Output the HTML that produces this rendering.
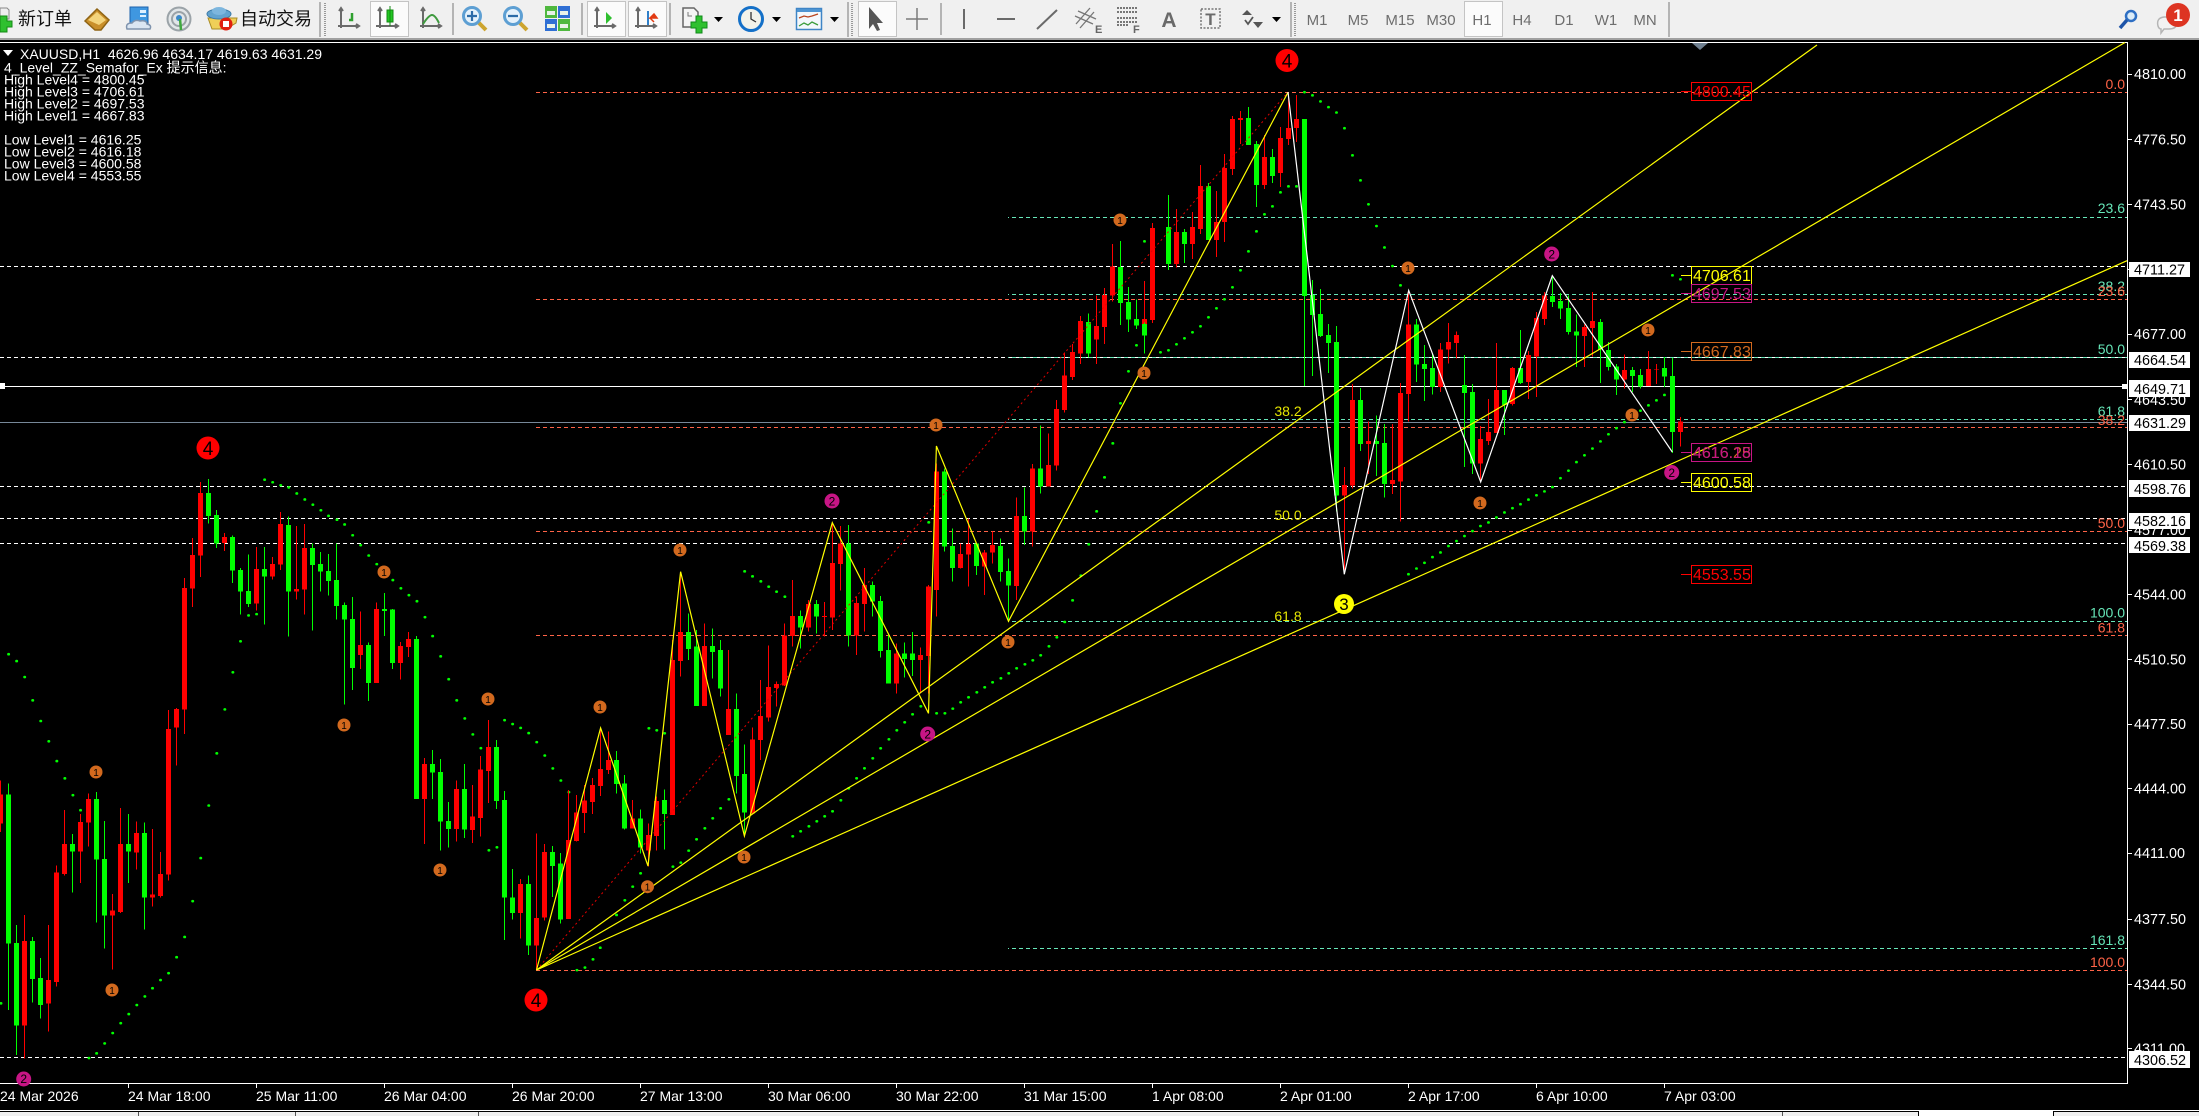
<!DOCTYPE html>
<html><head><meta charset="utf-8"><title>XAUUSD,H1</title>
<style>
html,body{margin:0;padding:0;background:#000;width:2199px;height:1116px;overflow:hidden}
svg{display:block}
text{font-family:"Liberation Sans","Noto Sans CJK SC",sans-serif}
.ns *{vector-effect:non-scaling-stroke}
.w{fill:none;stroke-width:1;shape-rendering:crispEdges}
.b{fill:none;stroke-width:5;shape-rendering:crispEdges}
.dots{fill:none;stroke:#0f0;stroke-width:2.6;stroke-linecap:round}
.tf{font-size:15px;fill:#6e6e6e;text-anchor:middle}
.px{font-size:14.4px;fill:#fff}
.lb{font-size:14.4px;fill:#000}
.tm{font-size:14px;fill:#fff}
.ov{font-size:14px;fill:#fff}
.fb{font-size:14px;text-anchor:end}
.bx{font-size:16px}
.num{text-anchor:middle;fill:#000}
</style></head><body>
<svg width="2199" height="1116" viewBox="0 0 2199 1116" xmlns="http://www.w3.org/2000/svg">
<rect width="2199" height="1116" fill="#000"/>

<!-- toolbar -->
<rect width="2199" height="38" fill="#f0f0f0"/>
<rect y="38" width="2199" height="2" fill="#a0a0a0"/>

<!-- new order -->
<path d="M0 8h7l2 2v9H0z" fill="#eee" stroke="#888"/>
<path d="M0 16h7v5h5v6H7v5H0z" fill="#2fc02f" stroke="#138a13"/>
<text x="18" y="25" font-size="18" fill="#111">新订单</text>
<!-- book -->
<path d="M85 21 97 9l12 11-8 10-6 0z" fill="#c98f2a" stroke="#8f6414" stroke-width="1.5"/>
<path d="M88 20 97 12l9 8-7 5z" fill="#f3d47c"/>
<!-- doc cloud -->
<rect x="130" y="7" width="18" height="17" fill="#3f97e0" stroke="#1c62ad"/>
<path d="M140 10h6v3h-6zM140 15h6v2h-6z" fill="#dff0ff"/>
<path d="M127 29q-2-6 5-6 3-4 8-2 7-1 7 3 5 1 3 5z" fill="#dbe6f2" stroke="#7f93ad" stroke-width="1.5"/>
<!-- signals -->
<circle cx="179" cy="19" r="11.5" fill="#e2e6e8" stroke="#9ba3a8" stroke-width="2"/>
<circle cx="179" cy="19" r="7" fill="none" stroke="#9ba3a8" stroke-width="2"/>
<circle cx="179" cy="18" r="3" fill="#3d89c9"/>
<path d="M180 19 181 30" stroke="#3fa83f" stroke-width="2.5"/>
<!-- auto trading -->
<path d="M208 18l4 11h14l10-6 1-5z" fill="#f0cf58" stroke="#a88b25"/>
<ellipse cx="219" cy="14" rx="12" ry="5" fill="#62a3cf" stroke="#3b79a6"/>
<ellipse cx="219" cy="11" rx="7" ry="4" fill="#7db6de"/>
<circle cx="226" cy="24" r="6.5" fill="#e01f10"/><rect x="223" y="21" width="6" height="6" fill="#fff"/>
<text x="240" y="25" font-size="18" fill="#111">自动交易</text>
<!-- separators -->
<path d="M320 2v35M453 3v32M582 3v32M670 3v32M848 2v35M941 3v32M1291 2v35M1669 2v35" stroke="#a0a0a0" stroke-width="1.5"/>
<path d="M325 3v33M852 3v33M1295 3v33" stroke="#999" stroke-width="2" stroke-dasharray="1 1"/>

<!-- buttons -->
<g fill="#fbfbfb" stroke="#c4c4c4">
<rect x="370.5" y="1.5" width="38" height="35"/>
<rect x="587.5" y="1.5" width="38" height="35"/>
<rect x="628.5" y="1.5" width="38" height="35"/>
<rect x="858.5" y="1.5" width="38" height="35"/>
<rect x="1464.5" y="1.5" width="38" height="35"/>
</g>
<!-- chart axes -->
<g fill="none" stroke="#6a6a6a" stroke-width="2">
<path d="M341 9v19M338 26h21M339 11l2-3 2 3M356 24l3 2-3 2"/>
<path d="M380 8v20M376 26h22M378 11l2-3 2 3M395 24l3 2-3 2"/>
<path d="M423 9v19M420 26h21M421 11l2-3 2 3M438 24l3 2-3 2"/>
<path d="M597 9v19M594 26h21M595 11l2-3 2 3M612 24l3 2-3 2"/>
<path d="M638 9v19M635 26h21M636 11l2-3 2 3M653 24l3 2-3 2"/>
</g>
<path d="M352 13v7h-3" fill="none" stroke="#2fa02f" stroke-width="2.5"/>
<rect x="387" y="10" width="6" height="12" fill="#22c722" stroke="#138a13"/><path d="M390 6v20" stroke="#138a13"/>
<path d="M423 24q6-9 9-9t7 8" fill="none" stroke="#3f9a3f" stroke-width="2"/>
<path d="M606 12l6 6-6 6z" fill="#2fc02f"/>
<path d="M648 11v14" stroke="#2f7fc9" stroke-width="2"/><path d="M657 18h-4l-3 0 4-4zm-7 0 4 4" fill="#e23b12" stroke="#e23b12" stroke-width="1.5"/>
<!-- zoom -->
<g>
<path d="M478 22l8 8M519 22l8 8" stroke="#cda52f" stroke-width="4"/>
<circle cx="472" cy="16" r="8.5" fill="#e6f2fb" stroke="#5d9fd3" stroke-width="3"/>
<circle cx="513" cy="16" r="8.5" fill="#e6f2fb" stroke="#5d9fd3" stroke-width="3"/>
<path d="M467 16h10M472 11v10M508 16h10" stroke="#2d6ca8" stroke-width="2.2"/>
</g>
<!-- tile -->
<rect x="545" y="6" width="12" height="12" fill="#4fb83f"/><rect x="558" y="6" width="12" height="12" fill="#2f6fd4"/>
<rect x="545" y="19" width="12" height="12" fill="#2f6fd4"/><rect x="558" y="19" width="12" height="12" fill="#4fb83f"/>
<path d="M547 11h8v4h-8zM560 11h8v4h-8zM547 24h8v4h-8zM560 24h8v4h-8z" fill="#e8f2e8"/>
<!-- new chart -->
<path d="M683 8h11l4 4v15h-15z" fill="#f4f4f4" stroke="#666" stroke-width="1.5"/>
<path d="M688 12v4h4" fill="none" stroke="#777"/>
<path d="M696 16h6v6h5v6h-5v5h-6v-5h-5v-6h5z" fill="#2fc02f" stroke="#0f8a1a"/>
<!-- dropdowns -->
<path d="M714 17h9l-4.500 5zM772 17h9l-4.500 5zM830 17h9l-4.500 5zM1272 17h9l-4.500 5z" fill="#000"/>
<!-- clock -->
<circle cx="751" cy="19" r="11.500" fill="#f3f3ea" stroke="#1470c8" stroke-width="3"/>
<path d="M751 12v7l5 3" fill="none" stroke="#333" stroke-width="1.300"/>
<!-- templates -->
<rect x="796.500" y="8.500" width="25" height="21" fill="#f4f8fc" stroke="#3f85c6" stroke-width="1.500"/>
<rect x="797" y="9" width="24" height="3" fill="#4d94d2"/>
<path d="M799 18l5-2 4 1 4-1 6-2" fill="none" stroke="#b84520" stroke-width="1.300"/>
<path d="M799 26l5-3 4 2 4-3 6 3" fill="none" stroke="#3b9c3b" stroke-width="1.300"/>
<!-- cursor -->
<path d="M869 7v22l4-5 4 7 3-1-3-7h6z" fill="#555"/>
<!-- cross -->
<path d="M917 8v22M906 19h22" stroke="#7a7a7a" stroke-width="1.500" fill="none"/>
<!-- vertical/h/trend -->
<path d="M964 9v20M997 19h18M1037 29l20-19" stroke="#6a6a6a" stroke-width="2" fill="none"/>
<!-- fib channel -->
<path d="M1076 24l14-16M1080 28l14-16M1075 16l18 8M1078 11l18 8" stroke="#777" stroke-width="1.300" fill="none"/>
<text x="1095" y="33" font-size="11" font-weight="bold" fill="#666">E</text>
<!-- fib -->
<path d="M1117 8h21M1117 12h21M1117 18h21M1117 22h21M1117 25h12" stroke="#777" stroke-width="2" stroke-dasharray="2 1" fill="none"/>
<text x="1133" y="33" font-size="11" font-weight="bold" fill="#666">F</text>
<text x="1169" y="27" font-size="21" font-weight="bold" fill="#6a6a6a" text-anchor="middle">A</text>
<rect x="1201" y="9" width="19" height="19" fill="none" stroke="#777" stroke-width="1.500" stroke-dasharray="2 1.500"/>
<text x="1210.500" y="25" font-size="17" font-weight="bold" fill="#6a6a6a" text-anchor="middle">T</text>
<path d="M1242 15l5-5 5 5zM1253 22h10l-5 6z" fill="#555"/><path d="M1245 20l3 4 5-7" stroke="#555" stroke-width="1.800" fill="none"/>
<!-- timeframes -->
<text class="tf" x="1317" y="25">M1</text><text class="tf" x="1358" y="25">M5</text><text class="tf" x="1400" y="25">M15</text><text class="tf" x="1441" y="25">M30</text><text class="tf" x="1482" y="25">H1</text><text class="tf" x="1522" y="25">H4</text><text class="tf" x="1564" y="25">D1</text><text class="tf" x="1606" y="25">W1</text><text class="tf" x="1645" y="25">MN</text>
<!-- search -->
<circle cx="2131" cy="16" r="5" fill="#dcecf8" stroke="#2e6fc4" stroke-width="2.500"/>
<path d="M2127 20l-7 8" stroke="#1e54a8" stroke-width="3.500"/>
<!-- chat/badge -->
<path d="M2158 26q-2-8 6-9h8q6 1 5 7-1 5-8 5h-5l-3 4v-4q-2 0-3-3z" fill="#f2f2f2" stroke="#b5b5b5" stroke-width="1.500"/>
<circle cx="2178" cy="15" r="12" fill="#dd3422"/>
<text x="2178" y="21" font-size="17" font-weight="bold" fill="#fff" text-anchor="middle">1</text>

<!-- chart frame -->
<path d="M0 42.500H2127.500V1083.500H0" fill="none" stroke="#fff"/>
<path d="M128.500 1084v4M256.500 1084v4M384.500 1084v4M512.500 1084v4M640.500 1084v4M768.500 1084v4M896.500 1084v4M1024.500 1084v4M1152.500 1084v4M1280.500 1084v4M1408.500 1084v4M1536.500 1084v4M1664.500 1084v4" stroke="#fff"/>
<path d="M1692 43h16l-8 7z" fill="#6f7f8f"/>

<!-- horizontal levels -->
<g fill="none" stroke-dasharray="4 3" shape-rendering="crispEdges">
<path d="M0 266.500H2127M0 357.500H2127M0 486.500H2127M0 518.500H2127M0 543.500H2127M0 1057.500H2127" stroke="#fff"/>
<path d="M1008 92.500H2127M1008 217.500H2127M1008 294.500H2127M1008 357.500H2127M1008 419.500H2127M1008 621.500H2127M1008 948.500H2127" stroke="#66e6b8" stroke-dashoffset="3"/>
<path d="M536 92.500H2127M536 299.500H2127M536 427.500H2127M536 531.500H2127M536 635.500H2127M536 970.500H2127" stroke="#ff6347"/>
</g>
<path d="M0 386.500H2127" stroke="#fff" shape-rendering="crispEdges"/>
<path d="M0 422.500H2127" stroke="#778899" shape-rendering="crispEdges"/>
<rect x="0" y="383" width="5" height="6" fill="#fff"/><rect x="2122" y="384" width="5" height="5" fill="#fff"/>

<!-- dots (parabolic SAR) -->
<g class="ns dots">
<g transform="translate(0,440) scale(.3827,.431)"><path d="M2 1307h1M22 497h1M43 513h1M64 550h1M85 604h1M106 652h1M127 699h1M148 745h1M169 785h1M190 824h1M210 859h1M232 1434h1M252 1423h1M273 1400h1M294 1376h1M315 1353h1M336 1332h1M357 1311h1M378 1291h1M398 1272h1M419 1253h1M440 1237h1M461 1200h1M482 1153h1M503 1070h1M524 970h1M545 848h1M566 727h1M587 625h1M608 539h1M628 467h1M649 407h1M670 404h1M691 92h1M712 98h1M733 105h1M754 110h1M775 124h1M796 138h1M817 150h1M838 163h1M858 176h1M880 185h1M900 196h1M921 221h1M942 244h1M963 268h1M984 288h1M1005 307h1M1026 325h1M1047 344h1M1068 360h1M1089 374h1M1110 411h1M1130 455h1M1151 502h1M1172 555h1M1193 604h1M1214 646h1M1235 683h1M1256 715h1M1277 952h1M1298 945h1M1318 650h1M1339 659h1M1360 668h1M1381 680h1M1402 701h1M1423 732h1M1444 762h1M1465 790h1M1486 817h1M1507 1230h1M1528 1224h1M1549 1205h1M1568 1178h1"/></g>
<g transform="translate(550,400) scale(.4146,.3333)"><path d="M160 1545h1M180 1501h1M199 1460h1M218 1420h1M238 985h1M257 991h1M276 1000h1M296 1400h1M315 1388h1M334 1352h1M353 1318h1M373 1285h1M392 1255h1M411 1225h1M431 1198h1M469 514h1M488 529h1M508 544h1M527 560h1M546 575h1M566 590h1M585 1309h1M604 1294h1M624 1279h1M643 1264h1M662 1249h1M681 1234h1M701 1201h1M720 1165h1M739 1135h1M758 1105h1M778 1075h1M797 1045h1M817 1018h1M836 991h1M855 967h1M874 943h1M894 919h1M913 367h1M932 940h1M952 940h1M971 926h1M990 907h1M1009 892h1M1029 877h1M1048 862h1M1067 847h1M1087 835h1M1106 820h1M1125 805h1M1145 793h1M1164 781h1M1183 766h1M1203 739h1M1222 712h1M1241 666h1M1260 601h1M1280 527h1M1299 433h1M1318 334h1M1337 232h1M1357 130h1"/></g>
<g transform="translate(950,60) scale(.3333,.3333)"><path d="M511 1030h1M535 934h1M559 856h1M583 544h1M607 550h1M631 877h1M655 871h1M679 853h1M703 835h1M727 817h1M751 799h1M775 772h1M799 745h1M823 718h1M847 682h1M871 631h1M895 574h1M919 514h1M943 463h1M967 439h1M991 397h1M1015 379h1M1039 379h1"/></g>
<g transform="translate(1200,60) scale(.3333,.3571)"><path d="M313 90h1M337 99h1M361 116h1M385 132h1M409 147h1M433 191h1M457 267h1M481 337h1M505 404h1M529 465h1M553 525h1M577 577h1M601 631h1M625 1440h1M649 1424h1M673 1408h1M697 1392h1M721 1379h1M745 1361h1M769 1347h1M793 1333h1M817 1319h1M841 1305h1M865 1295h1M889 1281h1M913 1267h1M937 1255h1M961 1244h1M985 1231h1M1009 1219h1M1033 1208h1M1057 1196h1M1081 1171h1M1105 1150h1M1129 1126h1M1153 1107h1M1177 1088h1M1201 1068h1M1225 1048h1M1249 1031h1M1273 1014h1M1321 982h1M1345 967h1M1369 953h1M1393 938h1M1417 603h1M1441 614h1"/></g>
</g>

<!-- candles -->
<g class="ns">
<g transform="translate(0,440) scale(1,.431)">
<path class="w" stroke="#f00" d="M.5 790V910M24.500 1102V1435M48.500 1125V1372M56.500 987V1268M64.500 858V1010M80.500 868V1028M88.500 820V943M112.500 1053V1228M120.500 854V1097M136.500 885V997M152.500 902V1082M160.500 956V1062M168.500 626V1022M176.500 622V755M184.500 320V682M192.500 227V387M200.500 98V318M224.500 216V257M256.500 248V396M272.500 271V324M280.500 167V302M296.500 200V370M304.500 195V405M360.500 398V531M376.500 377V564M400.500 469V556M408.500 446V503M424.500 738V937M456.500 790V932M472.500 800V935M480.500 733V920M488.500 650V842M520.500 1018V1157M536.500 913V1230M544.500 937V1115M568.500 812V1111M576.500 824V932M584.500 800V912M592.500 784V868"/>
<path class="b" stroke="#f00" d="M.5 822V890M24.500 1162V1358M48.500 1253V1307M56.500 1004V1257M64.500 937V1007M80.500 886V955M88.500 833V888M112.500 1092V1103M120.500 937V1095M136.500 912V957M152.500 1055V1061M160.500 1007V1058M168.500 670V1008M176.500 624V667M184.500 343V625M192.500 267V345M200.500 123V268M224.500 225V239M256.500 299V379M272.500 288V317M280.500 195V289M296.500 346V352M304.500 251V347M360.500 476V499M376.500 392V564M400.500 478V517M408.500 462V480M424.500 752V833M456.500 810V902M472.500 874V905M480.500 765V877M488.500 712V768M520.500 1030V1097M536.500 1109V1173M544.500 956V1108M568.500 928V1111M576.500 864V930M584.500 837V866M592.500 800V840"/>
<path class="w" stroke="#0f0" d="M8.500 797V1322M16.500 1125V1427M32.500 1153V1305M40.500 1202V1342M72.500 914V1050M96.500 817V1120M104.500 884V1180M128.500 868V1028M144.500 888V1136M208.500 90V194M216.500 162V250M232.500 222V332M240.500 297V405M248.500 266V388M264.500 248V428M288.500 177V456M312.500 240V442M320.500 260V352M328.500 264V361M336.500 240V417M344.500 377V614M352.500 364V580M368.500 470V605M384.500 355V455M392.500 392V531M416.500 455V833M432.500 719V833M440.500 740V953M448.500 840V945M464.500 752V923M496.500 696V856M504.500 814V1160M512.500 995V1112M528.500 1010V1195M552.500 942V1060M560.500 958V1122"/>
<path class="b" stroke="#0f0" d="M8.500 823V1168M16.500 1167V1358M32.500 1162V1250M40.500 1248V1311M72.500 937V955M96.500 833V973M104.500 972V1103M128.500 937V955M144.500 912V1061M208.500 123V176M216.500 174V240M232.500 225V303M240.500 302V352M248.500 350V380M264.500 299V317M288.500 197V352M312.500 251V290M320.500 288V305M328.500 304V327M336.500 325V385M344.500 383V417M352.500 415V529M368.500 476V564M384.500 392V397M392.500 393V517M416.500 462V833M432.500 752V772M440.500 770V885M448.500 884V902M464.500 810V904M496.500 712V838M504.500 835V1062M512.500 1061V1097M528.500 1030V1173M552.500 956V988M560.500 983V1112"/>
</g>
<g transform="translate(0,400) scale(1,.3333)">
<path class="w" stroke="#f00" d="M600.500 985V1188M608.500 995V1122M632.500 1200V1285M648.500 1270V1400M656.500 1190V1352M672.500 720V1245M680.500 520V830M704.500 670V918M728.500 750V1005M752.500 982V1240M760.500 840V1080M768.500 736V965M776.500 845V920M784.500 670V858M792.500 540V740M808.500 600V695M824.500 606V710M832.500 368V690M840.500 378V572M856.500 590V765M864.500 504V695M896.500 730V880M920.500 742V880M928.500 555V880M936.500 190V650M960.500 430V505M968.500 355V560M984.500 450V585M992.500 395V490M1016.500 292V600M1032.500 192V440M1048.500 100V260M1056.500 0V212"/>
<path class="b" stroke="#f00" d="M600.500 1107V1158M608.500 1080V1110M632.500 1255V1285M648.500 1305V1352M656.500 1203V1308M672.500 780V1245M680.500 696V783M704.500 738V918M728.500 927V1005M752.500 1018V1240M760.500 948V1020M768.500 861V952M776.500 852V864M784.500 706V856M792.500 648V708M808.500 612V682M824.500 648V651M832.500 489V652M840.500 430V492M856.500 609V707M864.500 555V612M896.500 760V850M920.500 765V780M928.500 560V768M936.500 215V570M960.500 462V504M968.500 432V464M984.500 458V500M992.500 435V458M1016.500 348V558M1032.500 205V395M1048.500 195V260M1056.500 27V197"/>
<path class="w" stroke="#0f0" d="M616.500 1053V1180M624.500 1125V1288M640.500 1228V1360M664.500 1168V1348M688.500 640V780M696.500 690V918M712.500 685V835M720.500 720V890M736.500 880V1180M744.500 1033V1305M800.500 632V745M816.500 600V700M848.500 375V740M872.500 545V650M880.500 588V772M888.500 700V850M904.500 728V832M912.500 696V828M944.500 205V455M952.500 385V545M976.500 430V525M1000.500 415V545M1008.500 475V665M1024.500 262V435M1040.500 77V280"/>
<path class="b" stroke="#0f0" d="M616.500 1080V1152M624.500 1150V1285M640.500 1255V1342M664.500 1200V1242M688.500 696V747M696.500 740V918M712.500 738V756M720.500 750V866M736.500 927V1128M744.500 1122V1237M800.500 648V682M816.500 612V650M848.500 430V706M872.500 555V605M880.500 603V753M888.500 750V850M904.500 760V777M912.500 760V780M944.500 215V440M952.500 438V504M976.500 430V498M1000.500 438V516M1008.500 513V557M1024.500 348V395M1040.500 205V260"/>
</g>
<g transform="translate(0,60) scale(1,.3333)">
<path class="w" stroke="#f00" d="M1064.500 878V1058M1072.500 852V960M1080.500 768V912M1096.500 706V912M1104.500 684V852M1112.500 552V725M1144.500 663V834M1152.500 489V789M1176.500 447V622M1192.500 456V597M1200.500 315V522M1216.500 393V591M1224.500 282V546M1232.500 168V345M1240.500 153V252M1264.500 225V387M1280.500 201V381M1288.500 100V255M1296.500 105V246"/>
<path class="b" stroke="#f00" d="M1064.500 947V1050M1072.500 876V951M1080.500 783V880M1096.500 798V838M1104.500 705V801M1112.500 620V706M1144.500 777V826M1152.500 504V780M1176.500 516V612M1192.500 501V552M1200.500 378V507M1216.500 486V540M1224.500 324V486M1232.500 177V327M1240.500 174V180M1264.500 291V375M1280.500 234V339M1288.500 204V237M1296.500 177V204"/>
<path class="w" stroke="#0f0" d="M1088.500 760V892M1120.500 543V795M1128.500 681V816M1136.500 718V807M1144.500 788V880M1168.500 405V630M1184.500 507V609M1208.500 369V540M1248.500 141V255M1256.500 243V441M1272.500 267V369M1304.500 177V978M1312.500 660V948M1320.500 687V831M1328.500 792V939"/>
<path class="b" stroke="#0f0" d="M1088.500 786V880M1120.500 621V729M1128.500 726V778M1136.500 777V796M1144.500 792V826M1168.500 501V612M1184.500 516V552M1208.500 378V540M1248.500 174V255M1256.500 252V375M1272.500 291V348M1304.500 177V708M1312.500 705V765M1320.500 762V828M1328.500 825V849"/>
</g>
<g transform="translate(0,60) scale(1,.3571)">
<path class="w" stroke="#0f0" d="M1336.500 745V1265M1360.500 918V1095M1376.500 995V1165M1384.500 1020V1225M1416.500 725V902M1424.500 798V955M1432.500 822V937M1464.500 826V1140M1472.500 908V1160M1504.500 924V1050M1520.500 756V908M1552.500 605V692M1560.500 652V725M1568.500 660V768M1576.500 712V860M1600.500 725V904M1608.500 790V870M1616.500 852V938M1632.500 860V930M1640.500 866V920M1664.500 832V916M1672.500 834V1100"/>
<path class="b" stroke="#0f0" d="M1336.500 790V1220M1360.500 952V1075M1376.500 1067V1075M1384.500 1072V1187M1416.500 740V853M1424.500 851V865M1432.500 862V916M1464.500 910V932M1472.500 930V1130M1504.500 924V966M1520.500 863V905M1552.500 661V678M1560.500 675V696M1568.500 694V762M1576.500 760V772M1600.500 734V810M1608.500 812V860M1616.500 858V895M1632.500 868V885M1640.500 882V915M1664.500 862V887M1672.500 885V1042"/>
<path class="w" stroke="#f00" d="M1344.500 1140V1428M1352.500 908V1200M1368.500 1012V1160M1392.500 1020V1215M1400.500 905V1293M1408.500 645V1012M1440.500 792V930M1448.500 736V850M1456.500 760V836M1480.500 1025V1180M1488.500 950V1078M1496.500 792V1045M1512.500 860V968M1528.500 815V950M1536.500 705V944M1544.500 650V742M1584.500 740V860M1592.500 650V830M1624.500 824V920M1648.500 815V913M1656.500 852V908M1680.500 1000V1082"/>
<path class="b" stroke="#f00" d="M1344.500 1190V1220M1352.500 952V1192M1368.500 1067V1075M1392.500 1176V1187M1400.500 932V1180M1408.500 740V935M1440.500 810V916M1448.500 790V811M1456.500 770V792M1480.500 1062V1130M1488.500 1042V1067M1496.500 924V1045M1512.500 862V964M1528.500 826V902M1536.500 722V830M1544.500 660V725M1584.500 748V773M1592.500 731V750M1624.500 868V895M1648.500 866V913M1656.500 865V867M1680.500 1013V1042"/>
</g>
</g>

<!-- red dotted trend -->
<path d="M536.500 970 1288 92" stroke="#e00000" stroke-dasharray="2 3" fill="none"/>
<!-- fan -->
<g fill="none" stroke="#ff0" stroke-width="1.200">
<path d="M536.500 970 1817 45"/>
<path d="M536.500 970 2125 42.500"/>
<path d="M536.500 970 2127 260.700"/>
<path d="M536.500 970 600.600 728 648 866 680.600 571.700 744.400 836 832.300 522.700 928.500 713.300 936.400 446 1008.500 621.300 1288 92.300"/>
</g>
<path d="M1288 92 1344.300 574.300 1408.700 290.400 1480.700 482 1552.300 275.700 1672.300 452" fill="none" stroke="#fff" stroke-width="1.200"/>

<!-- semafor badges -->
<g fill="#d2691e">
<circle cx="96" cy="772" r="6.500"/><circle cx="112" cy="990" r="6.500"/><circle cx="344" cy="725" r="6.500"/><circle cx="384" cy="572" r="6.500"/><circle cx="440" cy="870" r="6.500"/><circle cx="488" cy="699" r="6.500"/><circle cx="600" cy="707" r="6.500"/><circle cx="647.500" cy="886.700" r="6.500"/><circle cx="680" cy="550" r="6.500"/><circle cx="744" cy="857" r="6.500"/><circle cx="936" cy="425" r="6.500"/><circle cx="1008" cy="642" r="6.500"/><circle cx="1120" cy="220" r="6.500"/><circle cx="1144" cy="373" r="6.500"/><circle cx="1408" cy="268" r="6.500"/><circle cx="1480" cy="503" r="6.500"/><circle cx="1632" cy="415" r="6.500"/><circle cx="1648" cy="330" r="6.500"/>
</g>
<g font-size="10" class="num">
<text x="96" y="776">1</text><text x="112" y="994">1</text><text x="344" y="729">1</text><text x="384" y="576">1</text><text x="440" y="874">1</text><text x="488" y="703">1</text><text x="600" y="711">1</text><text x="647.500" y="890.700">1</text><text x="680" y="554">1</text><text x="744" y="861">1</text><text x="936" y="429">1</text><text x="1008" y="646">1</text><text x="1120" y="224">1</text><text x="1144" y="377">1</text><text x="1408" y="272">1</text><text x="1480" y="507">1</text><text x="1632" y="419">1</text><text x="1648" y="334">1</text>
</g>
<g fill="#c71585">
<circle cx="23.700" cy="1079" r="7.500"/><circle cx="832" cy="501" r="7.500"/><circle cx="927.700" cy="734" r="7.500"/><circle cx="1551.700" cy="254" r="7.500"/><circle cx="1671.700" cy="472.500" r="7.500"/>
</g>
<g font-size="12" class="num">
<text x="23.700" y="1083">2</text><text x="832" y="505.500">2</text><text x="927.700" y="738.500">2</text><text x="1551.700" y="258.500">2</text><text x="1671.700" y="477">2</text>
</g>
<g fill="#f00"><circle cx="208" cy="448" r="11.500"/><circle cx="536" cy="1000" r="11.500"/><circle cx="1287" cy="60.500" r="11.500"/></g>
<g font-size="19" class="num"><text x="208" y="455">4</text><text x="536" y="1007">4</text><text x="1287" y="67.500">4</text></g>
<circle cx="1344" cy="604" r="10" fill="#ff0"/><text class="num" x="1344" y="610" font-size="17">3</text>

<!-- yellow retracement labels -->
<g font-size="14" fill="#e6e600" text-anchor="middle"><text x="1288" y="416">38.2</text><text x="1288" y="520">50.0</text><text x="1288" y="621">61.8</text></g>

<!-- fib labels -->
<g class="fb" fill="#66e6b8">
<text class="fb" x="2125" y="213">23.6</text><text class="fb" x="2125" y="291">38.2</text><text class="fb" x="2125" y="354">50.0</text><text class="fb" x="2125" y="416">61.8</text><text class="fb" x="2125" y="617.500">100.0</text><text class="fb" x="2125" y="945">161.8</text>
</g>
<g class="fb" fill="#ff6347">
<text class="fb" x="2125" y="89">0.0</text><text class="fb" x="2125" y="296">23.6</text><text class="fb" x="2125" y="425">38.2</text><text class="fb" x="2125" y="528">50.0</text><text class="fb" x="2125" y="632.500">61.8</text><text class="fb" x="2125" y="967">100.0</text>
</g>

<!-- level boxes -->
<g fill="none" stroke-width="1" shape-rendering="crispEdges">
<g stroke="#f00"><path d="M1681 91.500h11M1681 574.500h11"/><rect x="1691.500" y="82.500" width="60" height="18"/><rect x="1691.500" y="565.500" width="60" height="18"/></g>
<g stroke="#ff0"><path d="M1681 275.500h11M1681 482.500h11"/><rect x="1691.500" y="266.500" width="60" height="18"/><rect x="1691.500" y="473.500" width="60" height="18"/></g>
<g stroke="#d2691e"><path d="M1681 351.500h11M1681 452.500h11"/><rect x="1691.500" y="342.500" width="60" height="18"/></g>
<g stroke="#c71585"><path d="M1681 293.500h11M1681 452.500h11"/><rect x="1691.500" y="284.500" width="60" height="18"/><rect x="1691.500" y="443.500" width="60" height="18"/></g>
</g>
<g class="bx">
<text x="1693" y="97" font-size="16" fill="#f00">4800.45</text>
<text x="1693" y="281" font-size="16" fill="#ff0">4706.61</text>
<text x="1693" y="299" font-size="16" fill="#c71585">4697.53</text>
<text x="1693" y="357" font-size="16" fill="#d2691e">4667.83</text>
<text x="1693" y="458" font-size="16" fill="#d2691e">4616.25</text>
<text x="1693" y="458" font-size="16" fill="#c71585">4616.18</text>
<text x="1693" y="488" font-size="16" fill="#ff0">4600.58</text>
<text x="1693" y="580" font-size="16" fill="#f00">4553.55</text>
</g>

<!-- price axis -->
<path d="M2128 74.500h4M2128 139.500h4M2128 204.500h4M2128 269.500h4M2128 334.500h4M2128 399.500h4M2128 464.500h4M2128 530.500h4M2128 594.500h4M2128 659.500h4M2128 724.500h4M2128 788.500h4M2128 853.500h4M2128 919.500h4M2128 984.500h4M2128 1048.500h4" stroke="#fff"/>
<g class="px">
<text class="px" x="2134" y="79">4810.00</text><text class="px" x="2134" y="144.500">4776.50</text><text class="px" x="2134" y="209.500">4743.50</text><text class="px" x="2134" y="339">4677.00</text><text class="px" x="2134" y="405">4643.50</text><text class="px" x="2134" y="469.500">4610.50</text><text class="px" x="2134" y="535">4577.00</text><text class="px" x="2134" y="599.500">4544.00</text><text class="px" x="2134" y="664.500">4510.50</text><text class="px" x="2134" y="729">4477.50</text><text class="px" x="2134" y="793.500">4444.00</text><text class="px" x="2134" y="858">4411.00</text><text class="px" x="2134" y="924">4377.50</text><text class="px" x="2134" y="989.500">4344.50</text><text class="px" x="2134" y="1053.500">4311.00</text>
</g>
<g fill="#fff">
<rect x="2129" y="262" width="61" height="15"/><rect x="2129" y="352" width="61" height="16"/><rect x="2129" y="380" width="61" height="17"/><rect x="2129" y="415" width="61" height="16"/><rect x="2129" y="480" width="61" height="17"/><rect x="2129" y="513" width="61" height="16"/><rect x="2129" y="537" width="61" height="16"/><rect x="2129" y="1051" width="61" height="17"/>
</g>
<g>
<text class="lb" x="2134" y="274.500">4711.27</text><text class="lb" x="2134" y="365">4664.54</text><text class="lb" x="2134" y="394">4649.71</text><text class="lb" x="2134" y="428">4631.29</text><text class="lb" x="2134" y="494">4598.76</text><text class="lb" x="2134" y="526">4582.16</text><text class="lb" x="2134" y="551">4569.38</text><text class="lb" x="2134" y="1065">4306.52</text>
</g>

<!-- time axis -->
<g>
<text class="tm" x="0" y="1101">24 Mar 2026</text><text class="tm" x="128" y="1101">24 Mar 18:00</text><text class="tm" x="256" y="1101">25 Mar 11:00</text><text class="tm" x="384" y="1101">26 Mar 04:00</text><text class="tm" x="512" y="1101">26 Mar 20:00</text><text class="tm" x="640" y="1101">27 Mar 13:00</text><text class="tm" x="768" y="1101">30 Mar 06:00</text><text class="tm" x="896" y="1101">30 Mar 22:00</text><text class="tm" x="1024" y="1101">31 Mar 15:00</text><text class="tm" x="1152" y="1101">1 Apr 08:00</text><text class="tm" x="1280" y="1101">2 Apr 01:00</text><text class="tm" x="1408" y="1101">2 Apr 17:00</text><text class="tm" x="1536" y="1101">6 Apr 10:00</text><text class="tm" x="1664" y="1101">7 Apr 03:00</text>
</g>

<!-- overlay text -->
<path d="M3 50h10l-5 6z" fill="#fff"/>
<text class="ov" x="20" y="59" xml:space="preserve">XAUUSD,H1  4626.96 4634.17 4619.63 4631.29</text>
<text class="ov" x="4" y="72.500">4_Level_ZZ_Semafor_Ex 提示信息:</text>
<text class="ov" x="4" y="84.500">High Level4 = 4800.45</text>
<text class="ov" x="4" y="96.500">High Level3 = 4706.61</text>
<text class="ov" x="4" y="108.500">High Level2 = 4697.53</text>
<text class="ov" x="4" y="120.500">High Level1 = 4667.83</text>
<text class="ov" x="4" y="144.500">Low Level1 = 4616.25</text>
<text class="ov" x="4" y="156.500">Low Level2 = 4616.18</text>
<text class="ov" x="4" y="168.500">Low Level3 = 4600.58</text>
<text class="ov" x="4" y="180.500">Low Level4 = 4553.55</text>

<!-- bottom tabs -->
<rect y="1110" width="2199" height="6" fill="#f0f0f0"/>
<rect y="1110" width="2199" height="1" fill="#fff"/>
<rect y="1111" width="1918" height="1" fill="#000"/><rect x="2053" y="1111" width="146" height="1" fill="#000"/>
<rect x="1919" y="1111" width="134" height="5" fill="#fff"/>
<rect x="1918" y="1111" width="1" height="5" fill="#000"/><rect x="2053" y="1111" width="1" height="5" fill="#000"/>
<path d="M138.500 1112v4M295.500 1112v4M478.500 1112v4M1782.500 1112v4" stroke="#555"/>
</svg>
</body></html>
